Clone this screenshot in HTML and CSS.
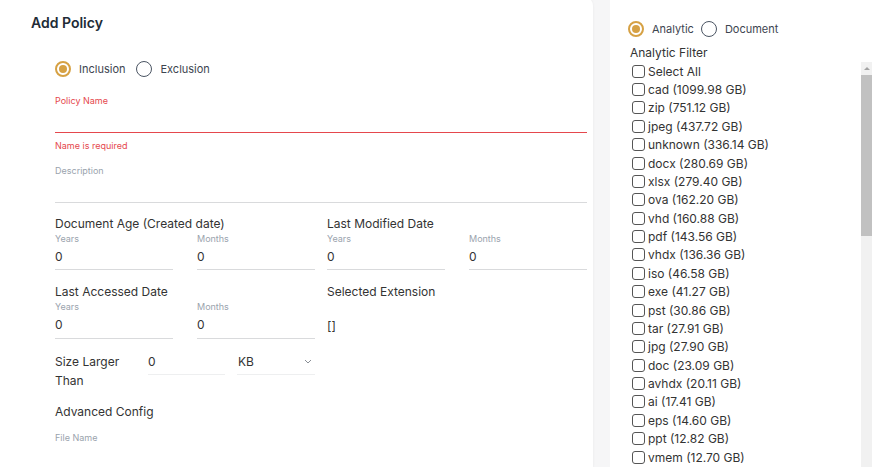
FILE: index.html
```html
<!DOCTYPE html>
<html>
<head>
<meta charset="utf-8">
<link rel="stylesheet" href="styles.css">
</head>
<body>
<div class="page">
  <section class="card policy">
    <h2 class="title">Add Policy</h2>
    <div class="form">
      <div class="radios">
        <label class="radio"><span class="dot on"></span>Inclusion</label>
        <label class="radio"><span class="dot"></span>Exclusion</label>
      </div>
      <div class="field first">
        <div class="flabel error-text">Policy Name</div>
        <div class="line error-line"></div>
      </div>
      <div class="helper error-text">Name is required</div>
      <div class="field desc">
        <div class="flabel">Description</div>
        <div class="line"></div>
      </div>

      <div class="groups">
        <div class="group">
          <div class="ghead">Document Age (Created date)</div>
          <div class="pair">
            <div class="sub"><div class="flabel">Years</div><div class="val">0</div></div>
            <div class="sub"><div class="flabel">Months</div><div class="val">0</div></div>
          </div>
        </div>
        <div class="group">
          <div class="ghead">Last Modified Date</div>
          <div class="pair">
            <div class="sub"><div class="flabel">Years</div><div class="val">0</div></div>
            <div class="sub"><div class="flabel">Months</div><div class="val">0</div></div>
          </div>
        </div>
        <div class="group">
          <div class="ghead">Last Accessed Date</div>
          <div class="pair">
            <div class="sub"><div class="flabel">Years</div><div class="val tall">0</div></div>
            <div class="sub"><div class="flabel">Months</div><div class="val tall">0</div></div>
          </div>
        </div>
        <div class="group">
          <div class="ghead">Selected Extension</div>
          <div class="ext">[]</div>
        </div>
      </div>

      <div class="size-row">
        <div class="size-label">Size Larger Than</div>
        <div class="size-input">0</div>
        <div class="size-unit">KB
          <svg class="chev" width="8" height="5" viewBox="0 0 8 5"><polyline points="1,1 4,4 7,1" fill="none" stroke="#8a8f96" stroke-width="1"/></svg>
        </div>
      </div>
      <div class="ghead adv">Advanced Config</div>
      <div class="flabel fname">File Name</div>
    </div>
  </section>

  <section class="card filter">
    <div class="radios small">
      <label class="radio"><span class="dot on"></span>Analytic</label>
      <label class="radio"><span class="dot"></span>Document</label>
    </div>
    <div class="ftitle">Analytic Filter</div>
    <div class="list">
      <ul class="items">
        <li><span class="box"></span>Select All</li>
        <li><span class="box"></span>cad (1099.98 GB)</li>
        <li><span class="box"></span>zip (751.12 GB)</li>
        <li><span class="box"></span>jpeg (437.72 GB)</li>
        <li><span class="box"></span>unknown (336.14 GB)</li>
        <li><span class="box"></span>docx (280.69 GB)</li>
        <li><span class="box"></span>xlsx (279.40 GB)</li>
        <li><span class="box"></span>ova (162.20 GB)</li>
        <li><span class="box"></span>vhd (160.88 GB)</li>
        <li><span class="box"></span>pdf (143.56 GB)</li>
        <li><span class="box"></span>vhdx (136.36 GB)</li>
        <li><span class="box"></span>iso (46.58 GB)</li>
        <li><span class="box"></span>exe (41.27 GB)</li>
        <li><span class="box"></span>pst (30.86 GB)</li>
        <li><span class="box"></span>tar (27.91 GB)</li>
        <li><span class="box"></span>jpg (27.90 GB)</li>
        <li><span class="box"></span>doc (23.09 GB)</li>
        <li><span class="box"></span>avhdx (20.11 GB)</li>
        <li><span class="box"></span>ai (17.41 GB)</li>
        <li><span class="box"></span>eps (14.60 GB)</li>
        <li><span class="box"></span>ppt (12.82 GB)</li>
        <li><span class="box"></span>vmem (12.70 GB)</li>
      </ul>
      <div class="rail">
        <div class="rail-btn"></div>
        <div class="rail-thumb"></div>
      </div>
    </div>
  </section>
</div>
</body>
</html>
```
FILE: styles.css
```css
* { box-sizing: border-box; }
html, body { margin: 0; padding: 0; }
body {
  background: #f6f6f7;
  font-family: Inter, "Noto Sans", "Liberation Sans", sans-serif;
  color: #333;
  overflow: hidden;
  height: 467px;
}
.page {
  display: flex;
  gap: 17px;
  height: 467px;
}
.card {
  background: #fff;
  height: 480px;
}
.policy {
  width: 593px;
  margin-top: -4px;
  border-radius: 0 10px 10px 0;
  box-shadow: 0 0 3px rgba(0,0,0,0.06);
  padding: 4px 6px 0 31px;
}
.title {
  margin: 0;
  padding-top: 14px;
  font-size: 14px;
  line-height: 18px;
  font-weight: 600;
  color: #212b36;
}
.form { padding-left: 24px; }

.radios {
  display: flex;
  gap: 11px;
  margin-top: 28px;
  height: 18px;
  align-items: center;
  font-size: 11px;
  color: #3d4550;
}
.radio { display: flex; align-items: center; gap: 8px; }
.dot {
  width: 16px; height: 16px;
  border-radius: 50%;
  border: 1.5px solid #4b5563;
  display: inline-flex;
  align-items: center;
  justify-content: center;
}
.dot.on { border: 2px solid #d6a144; }
.dot.on::after {
  content: "";
  width: 8px; height: 8px;
  border-radius: 50%;
  background: #d6a144;
}

.flabel {
  font-size: 9px;
  line-height: 12px;
  color: #9aa3ad;
}
.error-text { color: #e5484d; }
.field.first { margin-top: 17px; }
.line {
  height: 26px;
  border-bottom: 1px solid #d9dadc;
}
.error-line { border-bottom-color: #e5484d; }
.helper {
  margin-top: 7px;
  font-size: 9px;
  line-height: 12px;
}
.field.desc { margin-top: 13px; }

.groups {
  display: grid;
  grid-template-columns: 260px 260px;
  column-gap: 12px;
}
.group { margin-top: 13px; }
.group:nth-child(n+3) { margin-top: 14px; }
.ghead {
  font-size: 12px;
  line-height: 16px;
  color: #333;
}
.pair {
  display: grid;
  grid-template-columns: 118px 118px;
  column-gap: 24px;
  margin-top: 1px;
}
.val {
  height: 25px;
  border-bottom: 1px solid #d9dadc;
  font-size: 12px;
  line-height: 24px;
  color: #333;
}
.val.tall { height: 26px; }
.ext {
  margin-top: 18px;
  font-size: 12px;
  line-height: 16px;
}

.size-row {
  display: flex;
  align-items: flex-start;
  margin-top: 13px;
  gap: 12px;
}
.size-label {
  width: 81px;
  font-size: 12px;
  line-height: 19px;
}
.size-input, .size-unit {
  height: 23px;
  border-bottom: 1px solid #eeeff0;
  font-size: 12px;
  line-height: 19px;
  color: #333;
}
.size-input { width: 77px; }
.size-unit {
  width: 78px;
  padding-left: 1px;
  display: flex;
  justify-content: space-between;
}
.chev { margin-top: 7px; margin-right: 3px; }
.adv { margin-top: 14px; }
.fname { margin-top: 12px; }

.filter {
  width: 269px;
  padding: 2px 7px 0 18px;
  border-radius: 0;
}
.radios.small { margin-top: 18px; gap: 7px; }
.radios.small .radio { gap: 8px; }
.ftitle {
  margin-top: 7px;
  margin-left: 2px;
  font-size: 12px;
  line-height: 16px;
  color: #333;
}
.list {
  margin-top: 1px;
  margin-left: 2px;
  height: 420px;
  display: flex;
  overflow: hidden;
}
.items {
  list-style: none;
  margin: 0;
  padding: 0 0 0 2px;
  flex: 1;
  min-width: 0;
}
.items li {
  display: flex;
  align-items: center;
  gap: 3px;
  height: 18.38px;
  font-size: 12px;
  color: #333;
  white-space: nowrap;
}
.box {
  width: 13px; height: 13px;
  border: 1.4px solid #555;
  border-radius: 3px;
  flex: none;
}
.rail {
  width: 11px;
  flex: none;
  background: #f1f1f1;
  display: flex;
  flex-direction: column;
}
.rail-btn {
  height: 13px;
  display: flex;
  align-items: center;
  justify-content: center;
}
.rail-btn::after {
  content: "";
  border-left: 3px solid transparent;
  border-right: 3px solid transparent;
  border-bottom: 3px solid #a3a3a3;
}
.rail-thumb {
  height: 161px;
  background: #c1c1c1;
}
```
